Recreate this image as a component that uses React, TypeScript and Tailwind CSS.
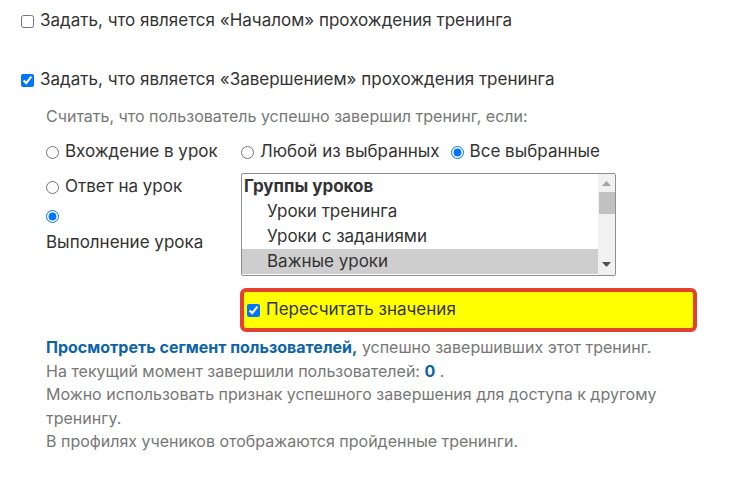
import type { ReactNode } from "react";

function Check({ checked, children }: { checked?: boolean; children: ReactNode }) {
  return (
    <label className="flex items-center gap-[6px]">
      <input type="checkbox" defaultChecked={checked} className="m-0 h-[13px] w-[13px] accent-[#0075ff]" />
      <span>{children}</span>
    </label>
  );
}

function Radio({ checked, name, children }: { checked?: boolean; name: string; children?: ReactNode }) {
  return (
    <label className="flex items-center gap-[6px]">
      <input type="radio" name={name} defaultChecked={checked} className="m-0 h-[13px] w-[13px] accent-[#0075ff]" />
      {children ? <span>{children}</span> : null}
    </label>
  );
}

const items = [
  { label: "Группы уроков", group: true },
  { label: "Уроки тренинга" },
  { label: "Уроки с заданиями" },
  { label: "Важные уроки", selected: true },
];

function LessonList() {
  return (
    <div className="flex h-[103px] w-[375px] overflow-hidden rounded-[2px] border border-[#8f8f8f] bg-white">
      <div className="flex-1">
        {items.map((it) => (
          <div
            key={it.label}
            className={`h-[25px] leading-[25px] ${it.group ? "pl-[2px] font-bold" : "pl-[25px]"} ${it.selected ? "bg-[#cecece]" : ""}`}
          >
            {it.label}
          </div>
        ))}
      </div>
      <div className="flex w-[17px] flex-col items-center bg-[#f1f1f1]">
        <svg width="9" height="5" viewBox="0 0 9 5" className="mt-[7px]">
          <path d="M0 5 L4.5 0 L9 5 Z" fill="#a3a3a3" />
        </svg>
        <div className="mt-[6px] h-[22px] w-[16px] bg-[#c1c1c1]" />
        <div className="flex-1" />
        <svg width="9" height="5" viewBox="0 0 9 5" className="mb-[8px]">
          <path d="M0 0 L9 0 L4.5 5 Z" fill="#505050" />
        </svg>
      </div>
    </div>
  );
}

export default function App() {
  return (
    <div className="h-[484px] w-[734px] bg-white pl-[21px] pt-[9px] font-['Inter',sans-serif] text-[17px] text-[#333]">
      <div className="flex h-[24px] items-center">
        <Check>Задать, что является «Началом» прохождения тренинга</Check>
      </div>
      <div className="mt-[35px] flex h-[24px] items-center">
        <Check checked>Задать, что является «Завершением» прохождения тренинга</Check>
      </div>

      <div className="ml-[25px]">
        <div className="mt-[12px] h-[24px] leading-[24px] text-[16px] text-[#777]">
          Считать, что пользователь успешно завершил тренинг, если:
        </div>

        <div className="mt-[11px] flex">
          <div className="w-[195px]">
            <div className="flex h-[26px] items-center">
              <Radio name="mode">Вхождение в урок</Radio>
            </div>
            <div className="mt-[9px] flex h-[26px] items-center">
              <Radio name="mode">Ответ на урок</Radio>
            </div>
            <div className="mt-[6px] flex h-[20px] items-center">
              <Radio name="mode" checked />
            </div>
            <div className="mt-[4px] h-[24px] leading-[24px]">Выполнение урока</div>
          </div>

          <div>
            <div className="flex h-[26px] items-center gap-[11px]">
              <Radio name="any">Любой из выбранных</Radio>
              <Radio name="any" checked>
                Все выбранные
              </Radio>
            </div>
            <div className="mt-[8px]">
              <LessonList />
            </div>
            <div className="ml-[-1px] mt-[12px] flex h-[44px] w-[457px] items-center rounded-[6px] border-[4px] border-[#e6412f] bg-[#ffff00] pl-[3px]">
              <Check checked>Пересчитать значения</Check>
            </div>
          </div>
        </div>

        <div className="mt-[4px] text-[16px] leading-[23.5px] text-[#777]">
          <div>
            <a className="font-bold text-[#0d63a8]">Просмотреть сегмент пользователей,</a> успешно завершивших этот
            тренинг.
          </div>
          <div>
            На текущий момент завершили пользователей: <b className="text-[#0d63a8]">0</b> .
          </div>
          <div className="w-[620px]">Можно использовать признак успешного завершения для доступа к другому тренингу.</div>
          <div>В профилях учеников отображаются пройденные тренинги.</div>
        </div>
      </div>
    </div>
  );
}
